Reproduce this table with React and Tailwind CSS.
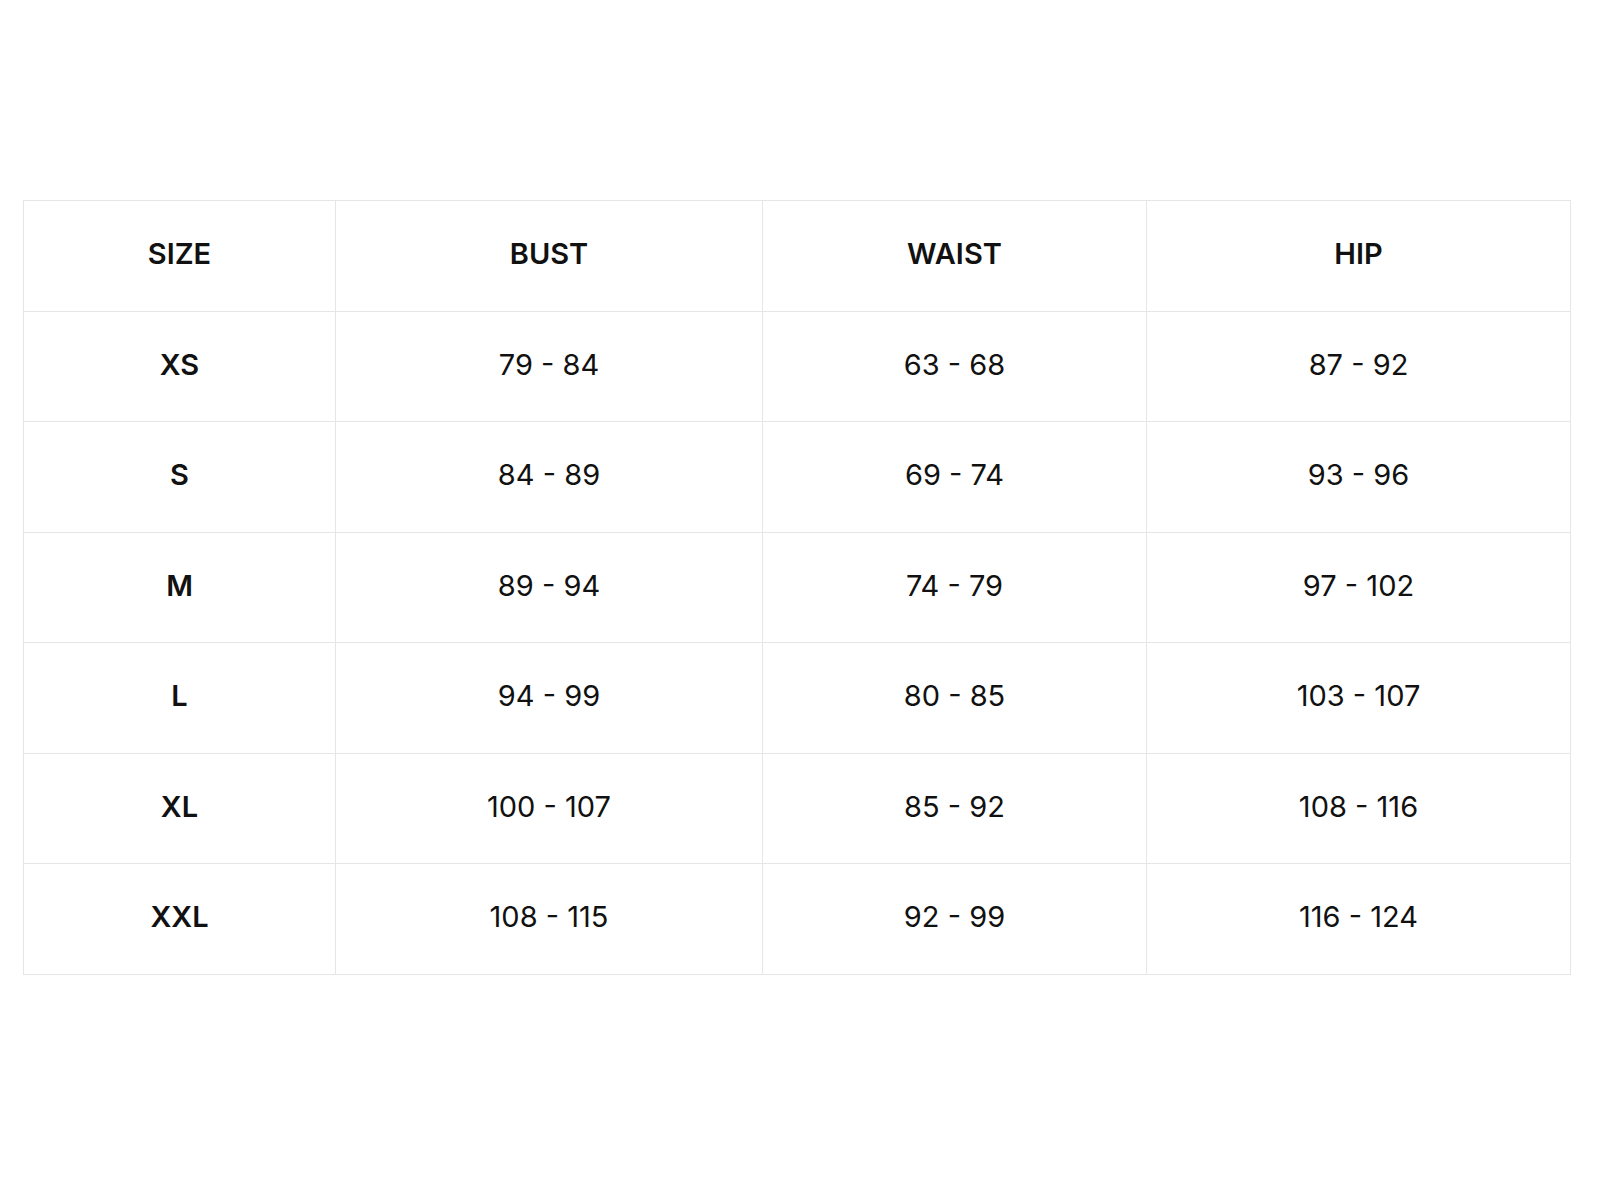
const headers = ['SIZE', 'BUST', 'WAIST', 'HIP'];

const rows = [
    ['XS', '79 - 84', '63 - 68', '87 - 92'],
    ['S', '84 - 89', '69 - 74', '93 - 96'],
    ['M', '89 - 94', '74 - 79', '97 - 102'],
    ['L', '94 - 99', '80 - 85', '103 - 107'],
    ['XL', '100 - 107', '85 - 92', '108 - 116'],
    ['XXL', '108 - 115', '92 - 99', '116 - 124'],
];

const cols = "grid grid-cols-[311px_427px_384px_1fr]";

export default function App() {
    return (
        <div className="w-[1600px] h-[1200px] bg-white pt-[200px] pl-[23px] pr-[29px]" style={{ fontFamily: 'Inter, "Liberation Sans", sans-serif' }}>
            <div className="border border-[#e6e6e6] text-[#111111]">
                <div className={cols}>
                    {headers.map((h, i) => (
                        <div key={h} className={`h-[109.5px] flex items-center justify-center text-[29px] font-semibold pb-1 ${i > 0 ? 'border-l border-[#e6e6e6]' : ''}`}>
                            {h}
                        </div>
                    ))}
                </div>
                {rows.map(r => (
                    <div key={r[0]} className={`${cols} border-t border-[#e6e6e6]`}>
                        {r.map((c, i) => (
                            <div key={i} className={`h-[109.5px] flex items-center justify-center text-[29px] pb-1 ${i === 0 ? 'font-semibold' : 'font-normal'} ${i > 0 ? 'border-l border-[#e6e6e6]' : ''}`}>
                                {c}
                            </div>
                        ))}
                    </div>
                ))}
            </div>
        </div>
    );
}
